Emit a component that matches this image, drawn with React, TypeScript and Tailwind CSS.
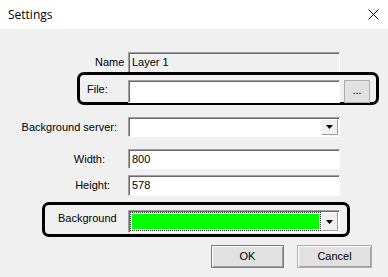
const box3d =
  'border-t border-l border-[#a0a0a0] border-b border-r border-b-white border-r-white shadow-[inset_1px_1px_0_#696969]';

function TextBox({ value, readOnly, h }: { value?: string; readOnly?: boolean; h: string }) {
  return (
    <div
      className={`${box3d} ${h} w-[212px] flex items-center pl-[3px] ${readOnly ? 'bg-[#f0f0f0]' : 'bg-white'}`}
    >
      <span className="text-[11px] leading-none text-black">{value}</span>
    </div>
  );
}

function ArrowBtn() {
  return (
    <div className="w-[17px] h-full flex items-center justify-center bg-[#f0f0f0] border-t border-l border-t-white border-l-white border-r border-b border-[#a0a0a0]">
      <svg width="7" height="4" viewBox="0 0 7 4">
        <path d="M0 0h7L3.5 4z" fill="#000" />
      </svg>
    </div>
  );
}

export default function App() {
  return (
    <div className="w-[388px] h-[277px] flex flex-col bg-[#f0f0f0] font-['Liberation_Sans',Arial,sans-serif] text-[11px] text-black overflow-hidden">
      {/* Title bar */}
      <div className="h-[29px] shrink-0 bg-white flex items-center justify-between pl-[8px] pr-[9px]">
        <span className="font-['Open_Sans',sans-serif] text-[12px]">Settings</span>
        <svg width="11" height="11" viewBox="0 0 11 11">
          <path d="M0.5 0.5l10 10M10.5 0.5l-10 10" stroke="#000" strokeWidth="1" />
        </svg>
      </div>

      {/* Name */}
      <div className="mt-[23px] flex items-center h-[21px]">
        <div className="w-[128px] pl-[95px]">
          <span className="whitespace-nowrap">Name</span>
        </div>
        <TextBox value="Layer 1" readOnly h="h-[21px]" />
      </div>

      {/* File (highlighted) */}
      <div className="relative -mt-[1px] ml-[77px] w-[302px] h-[33px] border-[3px] border-black rounded-[7px] flex items-start pt-[5px]">
        <span className="w-[48px] pl-[7px] pt-[1px]">File:</span>
        <TextBox h="h-[23px]" />
        <div className="ml-[4px] w-[26px] h-[23px] flex items-center justify-center bg-[#e1e1e1] border border-[#adadad] text-[11px] leading-none pb-[3px]">
          ...
        </div>
      </div>

      {/* Background server */}
      <div className="mt-[12px] flex items-center h-[20px]">
        <div className="w-[128px] flex justify-end pr-[11px]">
          <span>Background server:</span>
        </div>
        <div className={`${box3d} w-[212px] h-[20px] bg-white flex justify-end p-[1px]`}>
          <ArrowBtn />
        </div>
      </div>

      {/* Width */}
      <div className="mt-[12px] flex items-center h-[20px]">
        <div className="w-[128px] flex justify-end pr-[23px]">
          <span>Width:</span>
        </div>
        <TextBox value="800" h="h-[20px]" />
      </div>

      {/* Height */}
      <div className="mt-[6px] flex items-center h-[21px]">
        <div className="w-[128px] flex justify-end pr-[18px]">
          <span>Height:</span>
        </div>
        <TextBox value="578" h="h-[21px]" />
      </div>

      {/* Background (highlighted) */}
      <div className="mt-[6px] ml-[42px] w-[308px] h-[35px] border-[3px] border-black rounded-[7px] flex items-start pt-[5px]">
        <span className="w-[83px] pl-[13px] pt-[0px]">Background</span>
        <div className={`${box3d} w-[212px] h-[23px] bg-white flex p-[1px]`}>
          <div className="flex-1 p-[1px] border border-dotted border-[#333]">
            <div className="h-full bg-[#00ff00]" />
          </div>
          <ArrowBtn />
        </div>
      </div>

      {/* Buttons */}
      <div className="mt-[8px] flex h-[23px]">
        <div className="ml-[211px] w-[73px] h-[23px] flex items-center justify-center bg-[#e1e1e1] border border-[#7a7a7a] shadow-[inset_1px_1px_0_#fff,inset_-1px_-1px_0_#a0a0a0]">
          OK
        </div>
        <div className="ml-[13px] w-[75px] h-[23px] flex items-center justify-center bg-[#e1e1e1] border border-[#adadad] shadow-[inset_1px_1px_0_#fff,inset_-1px_-1px_0_#a0a0a0]">
          Cancel
        </div>
      </div>
    </div>
  );
}
